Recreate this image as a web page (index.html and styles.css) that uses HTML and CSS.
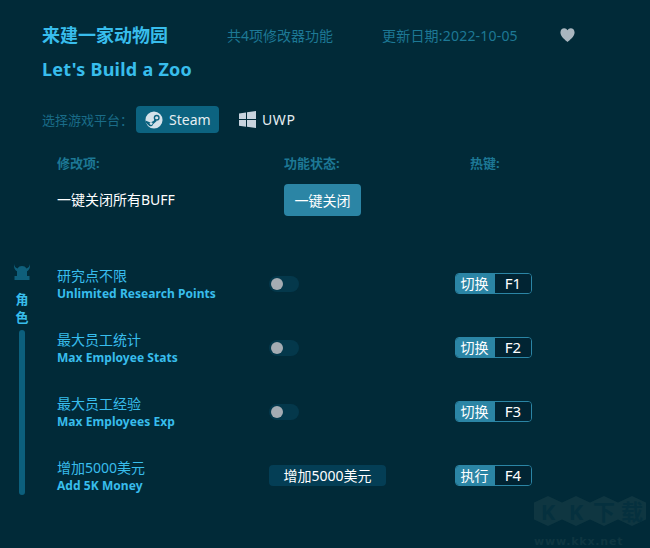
FILE: index.html
```html
<!DOCTYPE html>
<html lang="zh-CN">
<head>
    <meta charset="UTF-8">
    <meta name="viewport" content="width=device-width, initial-scale=1.0">
    <title>来建一家动物园</title>
    <link rel="stylesheet" href="styles.css">
</head>
<body>

    <div class="trainer">
        <!-- 标题 -->
        <header class="head">
            <div class="head-top">
                <h1 class="title title-cn">来建一家动物园</h1>
                <span class="meta meta-count">共4项修改器功能</span>
                <span class="meta meta-date">更新日期:2022-10-05</span>
                <svg class="heart" viewBox="0 0 16 15"><path d="M8 15C6 13 .4 9.6.4 4.8.4 2 2.3.3 4.5.3 6 .3 7.300 1.100 8 2.400 8.700 1.100 10 .3 11.500.3 13.700.3 15.600 2 15.600 4.800 15.600 9.600 10 13 8 15Z"/></svg>
            </div>
            <h2 class="title title-en">Let's Build a Zoo</h2>
        </header>

        <!-- 平台 -->
        <div class="platforms">
            <span class="platforms-label">选择游戏平台：</span>
            <a class="platform platform-active">
                <svg class="platform-icon" viewBox="0 0 20 20">
                    <circle cx="10" cy="10" r="9.500" fill="#d5e2ea"/>
                    <circle cx="13" cy="7.500" r="3.300" fill="#0c6380"/>
                    <circle cx="13" cy="7.500" r="1.800" fill="#d5e2ea"/>
                    <path d="M.5 10.500l5.500 2.300 3.500-1.800 1.500-2 2 2-4 3.600c-.5 2-2.500 3-4.200 2L.9 13Z" fill="#0c6380"/>
                    <circle cx="6.800" cy="14" r="1.600" fill="#d5e2ea"/>
                </svg>
                Steam
            </a>
            <a class="platform platform-uwp">
                <svg class="platform-icon-win" viewBox="0 0 17 17">
                    <path d="M0 2.400l7-1v6.700H0ZM8 1.200L17 0v8.100H8ZM0 9.100h7v6.600l-7-1ZM8 9.100h9V17l-9-1.200Z"/>
                </svg>
                UWP
            </a>
        </div>

        <!-- 一键关闭 -->
        <section class="master">
            <div class="master-head">
                <span>修改项:</span>
                <span>功能状态:</span>
                <span>热键:</span>
            </div>
            <div class="master-row">
                <span class="master-name">一键关闭所有BUFF</span>
                <button class="close-all">一键关闭</button>
            </div>
        </section>

        <!-- 修改项列表 -->
        <section class="cheats">
            <aside class="side">
                <svg class="side-icon" viewBox="0 0 16 16"><path d="M0 0c.5 2.500 1.500 3.800 3.500 4.500C4.500 2.800 6 2 8 2s3.500.8 4.500 2.500C14.500 3.800 15.500 2.500 16 0c.3 3.500-.8 6-3 7.300V12h2.500v4H.5v-4H3V7.300C.8 6-.3 3.500 0 0Z"/></svg>
                <span class="side-text">角</span>
                <span class="side-text">色</span>
                <div class="side-bar"></div>
            </aside>
            <div class="rows">
                <div class="row">
                    <div class="row-name"><span class="name-cn">研究点不限</span><span class="name-en">Unlimited Research Points</span></div>
                    <div class="toggle"><i></i></div>
                    <div class="hotkey"><span class="hotkey-act">切换</span><span class="hotkey-key">F1</span></div>
                </div>
                <div class="row">
                    <div class="row-name"><span class="name-cn">最大员工统计</span><span class="name-en">Max Employee Stats</span></div>
                    <div class="toggle"><i></i></div>
                    <div class="hotkey"><span class="hotkey-act">切换</span><span class="hotkey-key">F2</span></div>
                </div>
                <div class="row">
                    <div class="row-name"><span class="name-cn">最大员工经验</span><span class="name-en">Max Employees Exp</span></div>
                    <div class="toggle"><i></i></div>
                    <div class="hotkey"><span class="hotkey-act">切换</span><span class="hotkey-key">F3</span></div>
                </div>
                <div class="row">
                    <div class="row-name"><span class="name-cn">增加5000美元</span><span class="name-en">Add 5K Money</span></div>
                    <button class="do-button">增加5000美元</button>
                    <div class="hotkey"><span class="hotkey-act">执行</span><span class="hotkey-key">F4</span></div>
                </div>
            </div>
        </section>

        <!-- 水印 -->
        <div class="watermark">
            <div class="watermark-logo"><span>K</span><span>K</span><span>下</span><span>载</span></div>
            <div class="watermark-url">www.kkx.net</div>
        </div>
    </div>

</body>
</html>
```

FILE: styles.css
```css
/* 基础 */
body, html {
    margin: 0;
    padding: 0;
    height: 100%;
    font-family: 'Noto Sans', 'Noto Sans CJK SC', sans-serif;
    background-color: #012a38;
    color: #fff;
    overflow: hidden;
}

.trainer {
    position: relative;
    height: 548px;
    padding: 22px 0 0 42px;
    box-sizing: border-box;
}

/* 标题 */
.head-top {
    display: flex;
    align-items: center;
    height: 26px;
}

.title {
    margin: 0;
    font-size: 18px;
    font-weight: 700;
    color: #38bdec;
}

.title-cn {
    width: 185px;
    line-height: 26px;
}

.title-en {
    margin-top: 8px;
    line-height: 26px;
    letter-spacing: .25px;
}

.meta {
    font-size: 14px;
    color: #1d7895;
}

.meta-count {
    width: 155px;
}

.meta-date {
    width: 178px;
    letter-spacing: .2px;
}

.heart {
    width: 15px;
    height: 14px;
    fill: #a9b6bf;
}

/* 平台 */
.platforms {
    display: flex;
    align-items: center;
    margin-top: 24px;
    height: 27px;
}

.platforms-label {
    width: 94px;
    font-size: 13px;
    color: #1a6c88;
}

.platform {
    display: flex;
    align-items: center;
    gap: 6px;
    height: 27px;
    font-size: 14px;
    color: #e6eef2;
}

.platform-active {
    width: 83px;
    padding-left: 9px;
    box-sizing: border-box;
    margin-right: 20px;
    background-color: #0c6380;
    border-radius: 4px;
}

.platform-uwp {
    letter-spacing: .6px;
}

.platform-icon {
    width: 18px;
    height: 18px;
}

.platform-icon-win {
    width: 17px;
    height: 17px;
    fill: #c8d3de;
}

/* 一键关闭 */
.master {
    padding-left: 15px;
    margin-top: 20px;
}

.master-head {
    display: grid;
    grid-template-columns: 227px 186px auto;
    font-size: 13px;
    font-weight: 700;
    line-height: 20px;
    color: #1d7895;
}

.master-row {
    display: grid;
    grid-template-columns: 227px auto;
    align-items: center;
    margin-top: 11px;
    height: 32px;
    font-size: 14px;
}

.master-name {
    margin-bottom: 2px;
}

.close-all {
    width: 77px;
    height: 32px;
    padding: 0;
    border: none;
    border-radius: 4px;
    background-color: #2b85a5;
    color: #fff;
    font-family: inherit;
    font-size: 14px;
}

/* 列表 */
.cheats {
    display: flex;
    margin-top: 47px;
    margin-left: -28px;
}

.side {
    display: flex;
    flex-direction: column;
    align-items: center;
    width: 16px;
    margin-top: 1px;
    margin-right: 27px;
}

.side-icon {
    width: 16px;
    height: 16px;
    fill: #0f5f7b;
}

.side-text {
    font-size: 13px;
    font-weight: 700;
    line-height: 18px;
    color: #38bdec;
}

.side-text:first-of-type {
    margin-top: 10px;
}

.side-bar {
    width: 6px;
    height: 165px;
    margin-top: 4px;
    border-radius: 3px;
    background-color: #0c5f7c;
}

.rows {
    display: flex;
    flex-direction: column;
    gap: 24px;
}

.row {
    display: grid;
    grid-template-columns: 212px 186px auto;
    align-items: center;
    height: 40px;
}

.row-name {
    display: flex;
    flex-direction: column;
    padding-top: 4px;
    color: #38bdec;
}

.name-cn {
    font-size: 14px;
    line-height: 18px;
}

.name-en {
    font-size: 12px;
    font-weight: 700;
    line-height: 18px;
    letter-spacing: .05px;
}

.toggle {
    display: flex;
    align-items: center;
    width: 30px;
    height: 16px;
    margin-top: 2px;
    border-radius: 8px;
    background-color: #04384b;
}

.toggle i {
    width: 12px;
    height: 12px;
    margin-left: 2px;
    border-radius: 50%;
    background-color: #a4acb3;
}

.do-button {
    width: 117px;
    height: 21px;
    padding: 0;
    border: none;
    border-radius: 4px;
    background-color: #043e55;
    color: #fff;
    font-family: inherit;
    font-size: 14px;
}

.hotkey {
    display: flex;
    width: 77px;
    height: 21px;
    box-sizing: border-box;
    border: 1px solid #2b85a5;
    border-radius: 4px;
    font-size: 14px;
    line-height: 19px;
    overflow: hidden;
}

.hotkey-act {
    width: 39px;
    padding-right: 2px;
    box-sizing: border-box;
    text-align: center;
    background-color: #2b85a5;
}

.hotkey-key {
    flex: 1;
    text-align: center;
    font-size: 15px;
    background-color: #012433;
}

/* 水印 */
.watermark {
    position: absolute;
    left: 534px;
    top: 496px;
    width: 114px;
}

.watermark-logo {
    display: flex;
}

.watermark-logo span {
    width: 28px;
    height: 30px;
    line-height: 30px;
    text-align: center;
    font-size: 22px;
    font-weight: 700;
    color: #05303e;
    background-color: #0f3641;
    clip-path: polygon(50% 0, 100% 22%, 100% 78%, 50% 100%, 0 78%, 0 22%);
}

.watermark-url {
    margin-top: 10px;
    font-family: 'DejaVu Sans', sans-serif;
    font-size: 11px;
    font-weight: 700;
    line-height: 12px;
    letter-spacing: .8px;
    color: #0f3641;
}
```
